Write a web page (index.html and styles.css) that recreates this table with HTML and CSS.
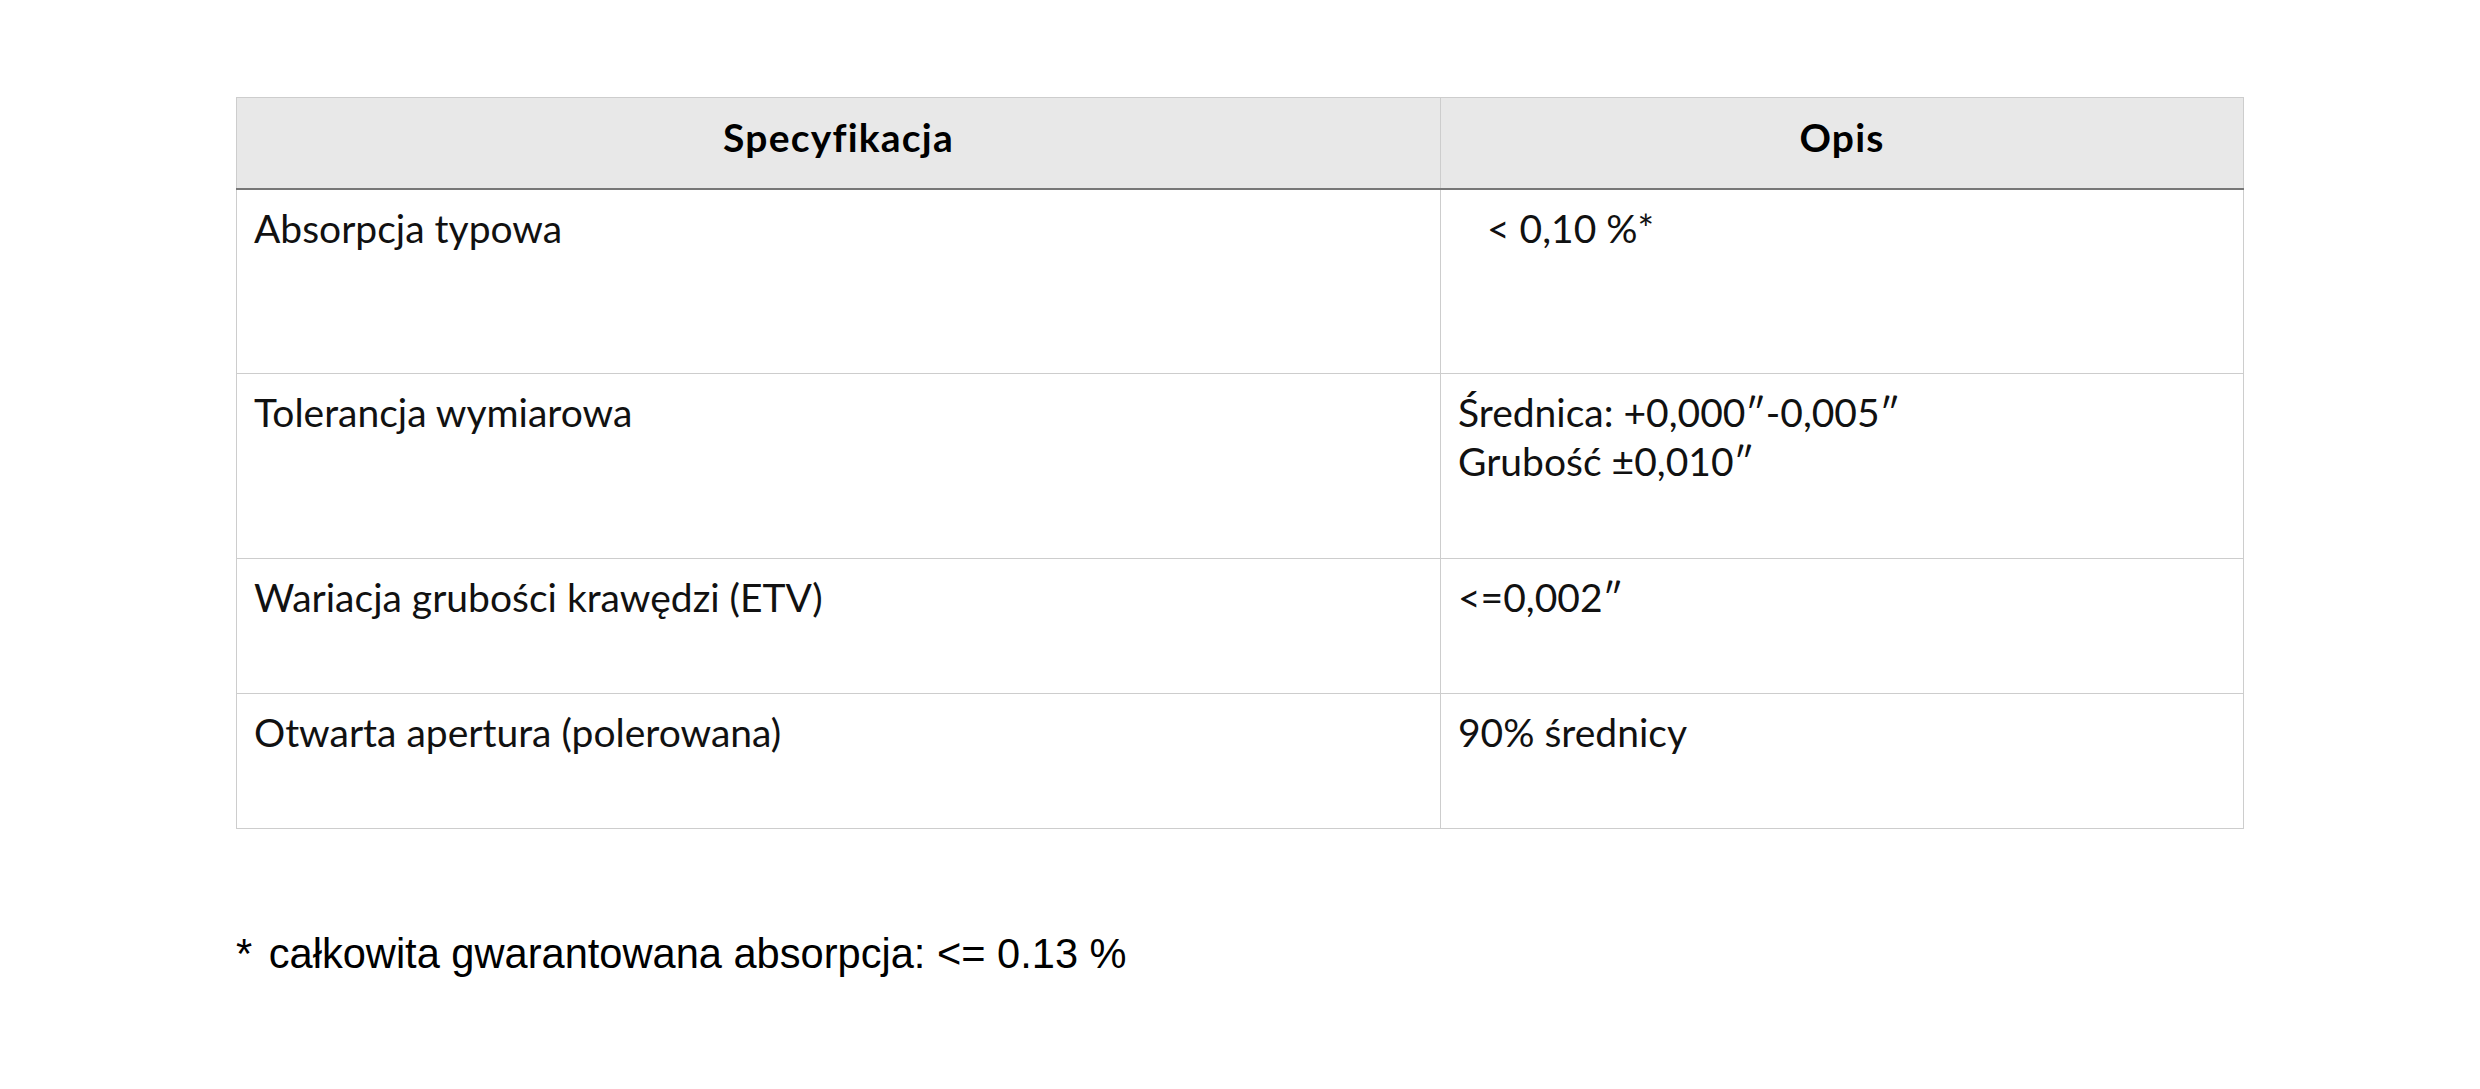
FILE: index.html
```html
<!DOCTYPE html>
<html lang="pl">
<head>
<meta charset="utf-8">
<title>Specyfikacja</title>
<link rel="stylesheet" href="styles.css">
</head>
<body>
<main class="page">
  <table class="spec">
    <thead>
      <tr>
        <th class="col-spec">Specyfikacja</th>
        <th class="col-desc">Opis</th>
      </tr>
    </thead>
    <tbody>
      <tr class="tall">
        <td>Absorpcja typowa</td>
        <td><span class="lead">&lt; 0,10 %*</span></td>
      </tr>
      <tr class="tall">
        <td>Tolerancja wymiarowa</td>
        <td>Średnica: +0,000″-0,005″<br>Grubość ±0,010″</td>
      </tr>
      <tr class="short">
        <td>Wariacja grubości krawędzi (ETV)</td>
        <td>&lt;=0,002″</td>
      </tr>
      <tr class="short">
        <td>Otwarta apertura (polerowana)</td>
        <td>90% średnicy</td>
      </tr>
    </tbody>
  </table>
  <p class="note"><span class="star">*</span> całkowita gwarantowana absorpcja: &lt;= 0.13 %</p>
</main>
</body>
</html>
```

FILE: styles.css
```css
html, body {
  margin: 0;
  padding: 0;
  background: #ffffff;
}

.page {
  padding: 97px 0 0 236px;
  font-family: Lato, "Noto Sans", sans-serif;
  color: #111111;
}

.spec {
  border-collapse: collapse;
  width: 2008px;
  table-layout: fixed;
  font-size: 39px;
  line-height: 49px;
}

.spec th,
.spec td {
  border: 1px solid #cdcdcd;
  vertical-align: top;
  text-align: left;
  padding: 14px 17px 0 17px;
  box-sizing: border-box;
}

.spec th {
  background: #e8e8e8;
  font-weight: 700;
  text-align: center;
  height: 91px;
  padding-top: 15px;
  color: #000000;
  letter-spacing: 1.2px;
  border-bottom: 2px solid #777777;
}

.col-spec {
  width: 1204px;
}

.tall {
  height: 185px;
}

.short {
  height: 135px;
}

.lead {
  padding-left: 29px;
}

.note {
  margin: 101px 0 0 0;
  font-family: "Liberation Sans", Arial, sans-serif;
  font-size: 41.6px;
  color: #000000;
}

.star {
  margin-right: 5px;
}
```
